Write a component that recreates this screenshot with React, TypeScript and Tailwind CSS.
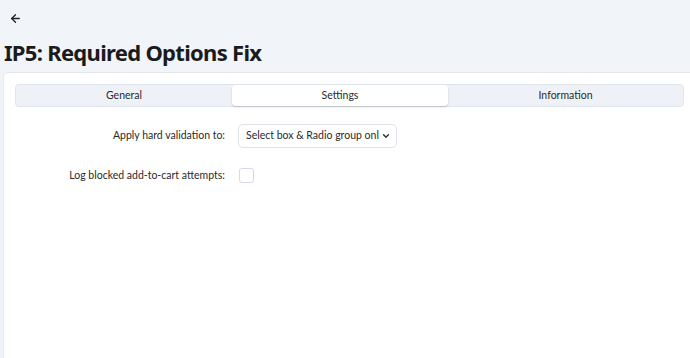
import React from "react";

export default function App() {
  return (
    <div
      className="w-[690px] h-[358px] overflow-hidden bg-[#f1f4f9] text-[#1f2328]"
      style={{ fontFamily: '"Noto Sans", "Open Sans", sans-serif' }}
    >
      <div className="h-[40px] pl-[9px] pt-[12px]">
        <svg width="13" height="13" viewBox="0 0 24 24" fill="none" stroke="#222" strokeWidth="2.4" strokeLinecap="round" strokeLinejoin="round">
          <path d="M19 12H5" />
          <path d="M12 19l-7-7 7-7" />
        </svg>
      </div>
      <h1 className="pl-[4px] text-[22px] leading-[24px] font-bold tracking-[-0.7px] text-[#1b1b1b]">
        IP5: Required Options Fix
      </h1>
      <div
        className="mt-[8px] ml-[3px] w-[700px] h-[300px] bg-white rounded-tl-[5px] border border-[#e3e8ef] pt-[11px] pl-[11px]"
        style={{ fontFamily: 'Lato, "Noto Sans", sans-serif' }}
      >
        <div className="w-[669px] h-[23px] bg-[#eef2f7] border border-[#dfe5ed] rounded-[4px] flex text-[10.5px] text-[#2a2a2a]">
          <div className="w-[216px] flex items-center justify-center">General</div>
          <div className="w-[216px] flex items-center justify-center bg-white rounded-[4px] shadow-[0_1px_2px_rgba(0,0,0,0.18)]">Settings</div>
          <div className="flex-1 flex items-center justify-center">Information</div>
        </div>
        <div className="mt-[17px] flex flex-col gap-[20px] text-[10.5px] text-[#2a2a2a]">
          <div className="flex items-center">
            <div className="w-[211px] text-right pr-[1px]">Apply hard validation to:</div>
            <div className="ml-[12px] w-[159px] h-[24px] border border-[#dfe3ea] rounded-[5px] flex items-center pl-[7px] pr-[6px] overflow-hidden">
              <span className="whitespace-nowrap overflow-hidden flex-1">Select box &amp; Radio group only</span>
              <svg width="8" height="8" viewBox="0 0 10 10" className="ml-[3px] shrink-0" fill="none" stroke="#333" strokeWidth="1.8" strokeLinecap="round" strokeLinejoin="round">
                <path d="M2 3.5l3 3 3-3" />
              </svg>
            </div>
          </div>
          <div className="flex items-center">
            <div className="w-[211px] text-right pr-[1px]">Log blocked add-to-cart attempts:</div>
            <div className="ml-[13px] w-[15px] h-[15px] border border-[#d5dbe4] rounded-[3px] bg-white" />
          </div>
        </div>
      </div>
    </div>
  );
}
